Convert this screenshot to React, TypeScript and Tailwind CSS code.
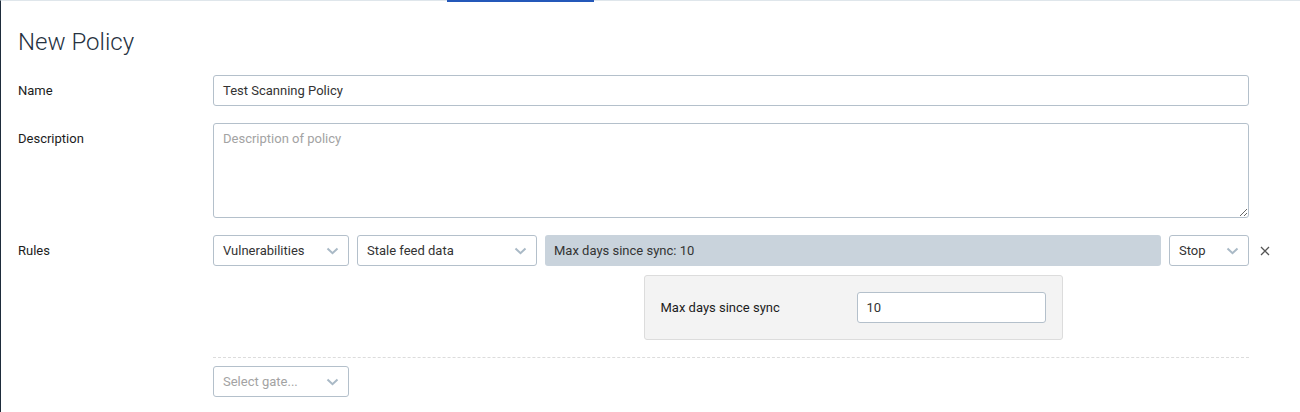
import React from "react";

function Chevron({ className = "" }: { className?: string }) {
  return (
    <svg
      width="13"
      height="8"
      viewBox="0 0 13 8"
      fill="none"
      className={className}
    >
      <path d="M1.5 1.5 L6.5 6.2 L11.5 1.5" stroke="#a9b9c6" strokeWidth="2" />
    </svg>
  );
}

function FakeSelect({
  value,
  width,
  placeholder = false,
}: {
  value: string;
  width: string;
  placeholder?: boolean;
}) {
  return (
    <div
      className={`${width} h-[31px] shrink-0 flex items-center justify-between pl-[9px] pr-[9px] border border-[#b4c0cb] rounded-[3px] bg-white text-[13px] ${
        placeholder ? "text-[#a3a3a3]" : "text-[#333]"
      }`}
    >
      <span>{value}</span>
      <Chevron />
    </div>
  );
}

export default function App() {
  return (
    <div className="relative min-h-[412px] bg-white border-l border-l-[#1e2c3b] border-t border-t-[#dfe6eb] font-['Roboto','Liberation_Sans',sans-serif] text-[#333]">
      {/* active tab indicator */}
      <div className="absolute top-[-1px] left-[446px] w-[147px] h-[2px] bg-[#2458b9]" />

      <div className="pl-[17px] pr-[51px] pt-[26px]">
        <h1 className="text-[24px] leading-[30px] font-light text-[#26323f]">
          New Policy
        </h1>

        <div className="mt-[18px] flex flex-col gap-[17px]">
          {/* Name */}
          <div className="flex">
            <label className="w-[195px] shrink-0 pt-[8px] text-[13px] leading-[15px] text-[#1c1c1c]">
              Name
            </label>
            <div className="flex-1 h-[31px] flex items-center px-[9px] border border-[#b4c0cb] rounded-[3px] text-[13px] text-[#333]">
              Test Scanning Policy
            </div>
          </div>

          {/* Description */}
          <div className="flex">
            <label className="w-[195px] shrink-0 pt-[8px] text-[13px] leading-[15px] text-[#1c1c1c]">
              Description
            </label>
            <textarea
              placeholder="Description of policy"
              className="flex-1 h-[95px] px-[9px] py-[7px] border border-[#b4c0cb] rounded-[3px] text-[13px] leading-[16px] text-[#333] placeholder:text-[#a3a3a3] outline-none"
            />
          </div>

          {/* Rules */}
          <div className="flex">
            <label className="w-[195px] shrink-0 pt-[8px] text-[13px] leading-[15px] text-[#1c1c1c]">
              Rules
            </label>
            <div className="flex-1 flex flex-col">
              <div className="flex items-start gap-2 -mr-[24px]">
                <FakeSelect value="Vulnerabilities" width="w-[136px]" />
                <FakeSelect value="Stale feed data" width="w-[180px]" />
                <div className="flex-1 flex flex-col items-center">
                  <div className="w-full h-[31px] flex items-center px-[9px] bg-[#c9d3dc] rounded-[3px] text-[13px] text-[#333]">
                    Max days since sync: 10
                  </div>
                  <div className="mt-[9px] w-[419px] h-[65px] flex items-center px-4 bg-[#f3f3f3] border border-[#dcdcdc] rounded-[3px]">
                    <span className="w-[196px] shrink-0 text-[13px] text-[#1c1c1c]">
                      Max days since sync
                    </span>
                    <div className="flex-1 h-[31px] flex items-center px-[9px] bg-white border border-[#b4c0cb] rounded-[3px] text-[13px] text-[#333]">
                      10
                    </div>
                  </div>
                </div>
                <FakeSelect value="Stop" width="w-[80px]" />
                <div className="w-[16px] h-[31px] flex items-center justify-center">
                  <svg width="10" height="10" viewBox="0 0 10 10">
                    <path
                      d="M1 1 L9 9 M9 1 L1 9"
                      stroke="#555"
                      strokeWidth="1.3"
                    />
                  </svg>
                </div>
              </div>

              <div className="mt-[17px] border-t border-dashed border-t-[#dcdcdc]" />

              <div className="mt-[8px]">
                <FakeSelect value="Select gate..." width="w-[136px]" placeholder />
              </div>
            </div>
          </div>
        </div>
      </div>
    </div>
  );
}
